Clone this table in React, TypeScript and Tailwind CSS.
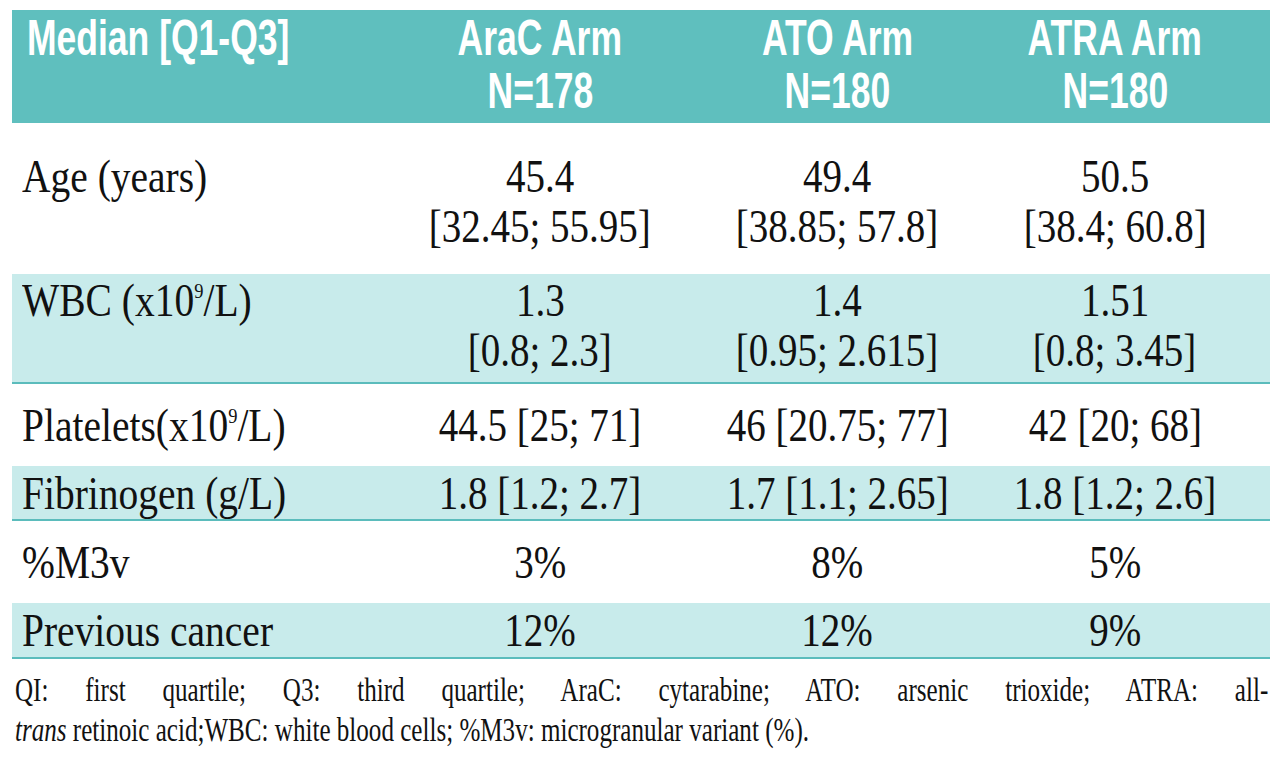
const serif = "font-['Liberation_Serif','Times_New_Roman',serif]";

type Row = {
  label: React.ReactNode;
  values: string[][];
  shaded: boolean;
  rowClass: string;
};

const x109 = (
  <>
    (x10<sup className="text-[22px] -top-[18px]">9</sup>/L)
  </>
);

const rows: Row[] = [
  {
    label: "Age (years)",
    values: [
      ["45.4", "[32.45; 55.95]"],
      ["49.4", "[38.85; 57.8]"],
      ["50.5", "[38.4; 60.8]"],
    ],
    shaded: false,
    rowClass: "h-[151px] pt-[28px] items-start",
  },
  {
    label: <>WBC {x109}</>,
    values: [
      ["1.3", "[0.8; 2.3]"],
      ["1.4", "[0.95; 2.615]"],
      ["1.51", "[0.8; 3.45]"],
    ],
    shaded: true,
    rowClass: "h-[110px] pt-[1px] items-start",
  },
  {
    label: <>Platelets{x109}</>,
    values: [["44.5 [25; 71]"], ["46 [20.75; 77]"], ["42 [20; 68]"]],
    shaded: false,
    rowClass: "h-[82px] items-center",
  },
  {
    label: "Fibrinogen (g/L)",
    values: [["1.8 [1.2; 2.7]"], ["1.7 [1.1; 2.65]"], ["1.8 [1.2; 2.6]"]],
    shaded: true,
    rowClass: "h-[55px] items-center",
  },
  {
    label: "%M3v",
    values: [["3%"], ["8%"], ["5%"]],
    shaded: false,
    rowClass: "h-[82px] items-center",
  },
  {
    label: "Previous cancer",
    values: [["12%"], ["12%"], ["9%"]],
    shaded: true,
    rowClass: "h-[56px] items-center",
  },
];

const cols = "grid grid-cols-[383px_290px_305px_250px_1fr]";

function HeaderCell({ lines, left }: { lines: string[]; left?: boolean }) {
  return (
    <div className={left ? "pl-[15px] text-left" : "text-center"}>
      {lines.map((l) => (
        <div key={l} className="h-[53px] whitespace-nowrap">
          <span className={`inline-block scale-x-[0.71] ${left ? "origin-left" : "origin-center"}`}>{l}</span>
        </div>
      ))}
    </div>
  );
}

export default function App() {
  return (
    <div className="w-[1280px] h-[772px] bg-white overflow-hidden">
      <div className="ml-[12px] mt-[10px] w-[1258px]">
        <div
          className={`${cols} bg-[#5fbfbe] text-white font-bold text-[50px] leading-[53px] h-[113px] pt-[2px] font-['Liberation_Sans',Arial,sans-serif]`}
        >
          <HeaderCell lines={["Median [Q1-Q3]"]} left />
          <HeaderCell lines={["AraC Arm", "N=178"]} />
          <HeaderCell lines={["ATO Arm", "N=180"]} />
          <HeaderCell lines={["ATRA Arm", "N=180"]} />
          <div />
        </div>

        {rows.map((r, i) => (
          <div
            key={i}
            className={`${cols} ${r.rowClass} ${serif} text-[47px] leading-[50px] text-[#111] ${
              r.shaded ? "bg-[#c8ebeb] border-b-2 border-[#5bbcbc]" : "bg-white"
            }`}
          >
            <div className="pl-[10px] whitespace-nowrap">
              <span className="inline-block scale-x-[0.84] origin-left">{r.label}</span>
            </div>
            {r.values.map((v, j) => (
              <div key={j} className="text-center whitespace-nowrap">
                {v.map((line) => (
                  <div key={line}>
                    <span className="inline-block scale-x-[0.83] origin-center">{line}</span>
                  </div>
                ))}
              </div>
            ))}
            <div />
          </div>
        ))}
      </div>

      <div className={`${serif} text-[33px] leading-[40px] text-[#111] mt-[11px] ml-[15px]`}>
        <div className="w-[1649px] scale-x-[0.76] origin-left [text-align-last:justify] whitespace-nowrap">
          QI: first quartile; Q3: third quartile; AraC: cytarabine; ATO: arsenic trioxide; ATRA: all-
        </div>
        <div className="w-[1649px] scale-x-[0.76] origin-left whitespace-nowrap">
          <i>trans</i> retinoic acid;WBC: white blood cells; %M3v: microgranular variant (%).
        </div>
      </div>
    </div>
  );
}
